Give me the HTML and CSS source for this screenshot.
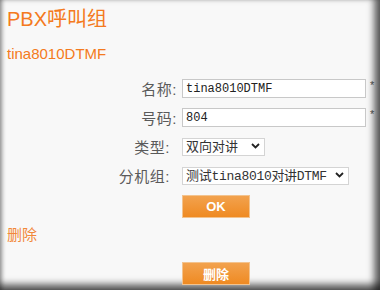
FILE: index.html
```html
<!DOCTYPE html>
<html lang="zh">
<head>
    <meta charset="UTF-8">
    <title>PBX呼叫组</title>
    <link rel="stylesheet" href="styles.css">
</head>
<body>
    <div class="page">
        <h1>PBX呼叫组</h1>
        <h2>tina8010DTMF</h2>

        <form class="group-form">
            <div class="row">
                <label>名称:</label>
                <input type="text" class="field" value="tina8010DTMF">
                <span class="req">*</span>
            </div>
            <div class="row">
                <label>号码:</label>
                <input type="text" class="field" value="804">
                <span class="req">*</span>
            </div>
            <div class="row">
                <label class="short">类型:</label>
                <span class="select-wrap">
                    <select class="sel sel-type">
                        <option>双向对讲</option>
                    </select>
                    <svg class="chev" width="9" height="6" viewBox="0 0 9 6"><path d="M1 1l3.5 3.5L8 1" fill="none" stroke="#222" stroke-width="1.8"/></svg>
                </span>
            </div>
            <div class="row">
                <label class="short">分机组:</label>
                <span class="select-wrap">
                    <select class="sel sel-group">
                        <option>测试tina8010对讲DTMF</option>
                    </select>
                    <svg class="chev" width="9" height="6" viewBox="0 0 9 6"><path d="M1 1l3.5 3.5L8 1" fill="none" stroke="#222" stroke-width="1.8"/></svg>
                </span>
            </div>
            <div class="row">
                <label></label>
                <button type="button" class="btn">OK</button>
            </div>
        </form>

        <a href="#" class="del-link">删除</a>

        <div class="row del-row">
            <label></label>
            <button type="button" class="btn">删除</button>
        </div>
    </div>
</body>
</html>
```

FILE: styles.css
```css
html, body {
    margin: 0;
    padding: 0;
}

body {
    font-family: 'Liberation Sans', Arial, 'Noto Sans CJK SC', sans-serif;
    background-color: #f8f8f8;
    overflow: hidden;
}

.page {
    height: 290px;
    padding: 6px 0 0 7px;
    box-sizing: border-box;
    box-shadow:
        inset -9px 0 7px -3px rgba(0, 0, 0, 0.6),
        inset 0 -9px 7px -3px rgba(0, 0, 0, 0.6),
        inset 4px 0 4px -2px rgba(0, 0, 0, 0.35);
}

h1 {
    margin: 0;
    font-size: 20px;
    font-weight: normal;
    color: #f47a20;
    line-height: 26px;
}

h2 {
    margin: 13px 0 0 0;
    font-size: 15px;
    font-weight: normal;
    color: #f47a20;
    line-height: 18px;
}

.group-form {
    margin-top: 16px;
    display: flex;
    flex-direction: column;
    gap: 10px;
}

.row {
    display: flex;
    align-items: center;
    gap: 5px;
    height: 19px;
}

.row label {
    width: 170px;
    text-align: right;
    font-size: 15px;
    color: #5a5a5a;
    letter-spacing: 0.5px;
}

.row label.short {
    width: 163px;
    margin-right: 7px;
}

.field {
    width: 184px;
    height: 19px;
    box-sizing: border-box;
    border: 1px solid #c8c8c8;
    background: #fff;
    padding: 0 3px;
    font-family: 'Liberation Mono', 'Noto Sans CJK SC', monospace;
    font-size: 12px;
    color: #222;
}

.req {
    font-size: 11px;
    color: #444;
    align-self: flex-start;
    margin-left: -1px;
}

.select-wrap {
    position: relative;
    display: inline-block;
}

.sel {
    appearance: none;
    -webkit-appearance: none;
    height: 18px;
    box-sizing: border-box;
    border: 1px solid #d4d4d4;
    border-radius: 0;
    background: #fff;
    padding: 0 0 0 3px;
    font-family: 'Liberation Mono', 'Noto Sans CJK SC', monospace;
    font-size: 13px;
    color: #333;
}

.sel-type {
    width: 83px;
}

.sel-group {
    width: 167px;
    letter-spacing: -0.3px;
}

.chev {
    position: absolute;
    right: 5px;
    top: 6px;
}

.btn {
    width: 68px;
    height: 23px;
    margin-top: 3px;
    border: 1px solid #f3c38e;
    background: linear-gradient(#f2a24e, #ef8a22);
    color: #fff;
    font-family: 'Liberation Sans', Arial, 'Noto Sans CJK SC', sans-serif;
    font-weight: bold;
    font-size: 13px;
    padding: 0;
}

.del-link {
    display: block;
    margin-top: 12px;
    font-size: 15px;
    color: #f2883a;
    text-decoration: none;
    line-height: 18px;
}

.del-row {
    margin-top: 18px;
}
```
